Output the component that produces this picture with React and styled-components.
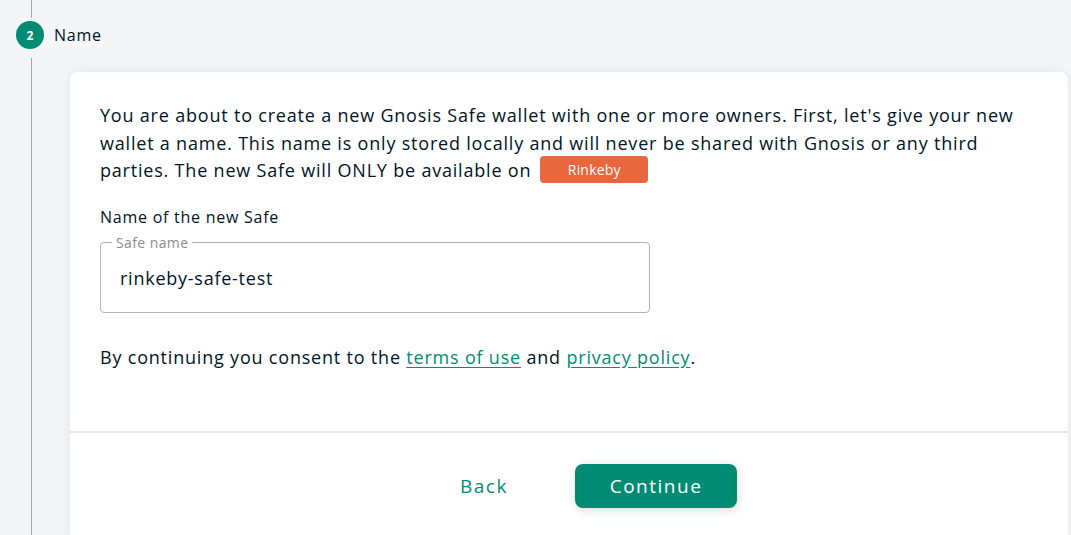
import styled, { createGlobalStyle } from 'styled-components';

const GlobalStyle = createGlobalStyle`
  html, body {
    margin: 0;
    padding: 0;
    background: #f4f5f6;
    font-family: 'Open Sans', 'Lato', sans-serif;
    letter-spacing: 0.75px;
    color: #001428;
    overflow: hidden;
  }
`;

const GREEN = '#008c73';

const Page = styled.div`
  width: 1071px;
  height: 535px;
  display: grid;
  grid-template-columns: 70px 1fr;
  grid-template-rows: 72px 1fr;
  box-sizing: border-box;
  padding-right: 3px;
  overflow: hidden;
`;

const Rail = styled.div`
  grid-row: 1 / 3;
  grid-column: 1;
  display: flex;
  flex-direction: column;
  align-items: flex-start;
  padding-left: 31px;
`;

const RailLine = styled.div`
  width: 1px;
  height: ${(p) => p.$h || 'auto'};
  flex-grow: ${(p) => (p.$grow ? 1 : 0)};
  background: #a2a8ad;
`;

const RailGap = styled.div`
  height: 40px;
`;

const StepRow = styled.div`
  grid-row: 1;
  grid-column: 1 / 3;
  display: flex;
  align-items: center;
  gap: 10px;
  padding-left: 16px;
  height: 72px;
  margin-top: -1px;
  z-index: 1;
`;

const StepCircle = styled.span`
  width: 28px;
  height: 28px;
  border-radius: 50%;
  background: ${GREEN};
  color: #fff;
  font-size: 12px;
  font-weight: 700;
  letter-spacing: 0;
  display: flex;
  align-items: center;
  justify-content: center;
`;

const StepLabel = styled.span`
  font-size: 16px;
  color: #001428;
`;

const Card = styled.div`
  grid-row: 2;
  grid-column: 2;
  background: #fff;
  border-radius: 8px 8px 0 0;
  box-shadow: 0 0 10px rgba(40, 54, 61, 0.08);
  display: flex;
  flex-direction: column;
`;

const CardBody = styled.div`
  padding: 30px 30px 0 30px;
  height: 359px;
  box-sizing: border-box;
  display: flex;
  flex-direction: column;
`;

const Intro = styled.p`
  margin: 0;
  font-size: 18px;
  line-height: 27.5px;
  letter-spacing: 0.8px;
  color: #001428;
`;

const Badge = styled.span`
  display: inline-block;
  width: 108px;
  height: 27px;
  line-height: 27px;
  text-align: center;
  margin-left: 9px;
  border-radius: 4px;
  background: #e8673c;
  color: #fff;
  font-size: 14px;
  letter-spacing: 0.2px;
  vertical-align: top;
  position: relative;
  top: -1px;
`;

const FieldTitle = styled.div`
  margin-top: 21px;
  font-size: 16px;
  color: #001428;
`;

const Fieldset = styled.fieldset`
  margin: 8px 0 0 0;
  width: 550px;
  height: 77px;
  box-sizing: border-box;
  border: 1px solid #b2b5b2;
  border-radius: 4px;
  padding: 0 19px;
`;

const Legend = styled.legend`
  font-size: 14px;
  color: #8b8d8f;
  letter-spacing: 0.4px;
  padding: 0 4px;
  margin-left: -8px;
  line-height: 1;
`;

const InputText = styled.div`
  font-size: 18px;
  color: #001428;
  margin-top: 16px;
`;

const Consent = styled.p`
  margin: 32px 0 0 0;
  font-size: 18px;
  letter-spacing: 0.8px;
  color: #001428;
`;

const Link = styled.a`
  color: ${GREEN};
  text-decoration: underline;
  text-underline-offset: 3px;
`;

const Divider = styled.div`
  height: 2px;
  background: #e8e7e6;
`;

const Footer = styled.div`
  display: flex;
  justify-content: center;
  align-items: center;
  gap: 41px;
  padding: 31px 0 0 33px;
`;

const Button = styled.button`
  border: none;
  border-radius: 8px;
  cursor: pointer;
  font-family: inherit;
  font-size: 19px;
  letter-spacing: 1.5px;
  height: 44px;
  background: ${(p) => (p.$primary ? GREEN : 'transparent')};
  color: ${(p) => (p.$primary ? '#fff' : GREEN)};
  width: ${(p) => (p.$primary ? '162px' : '100px')};
  box-shadow: ${(p) => (p.$primary ? '1px 2px 10px rgba(40, 54, 61, 0.18)' : 'none')};
`;

export default function App() {
  return (
    <>
      <GlobalStyle />
      <Page>
        <Rail>
          <RailLine $h="18px" />
          <RailGap />
          <RailLine $grow />
        </Rail>
        <StepRow>
          <StepCircle>2</StepCircle>
          <StepLabel>Name</StepLabel>
        </StepRow>
        <Card>
          <CardBody>
            <Intro>
              You are about to create a new Gnosis Safe wallet with one or more owners. First, let's
              give your new wallet a name. This name is only stored locally and will never be shared
              with Gnosis or any third parties. The new Safe will ONLY be available on
              <Badge>Rinkeby</Badge>
            </Intro>
            <FieldTitle>Name of the new Safe</FieldTitle>
            <Fieldset>
              <Legend>Safe name</Legend>
              <InputText>rinkeby-safe-test</InputText>
            </Fieldset>
            <Consent>
              By continuing you consent to the <Link>terms of use</Link> and{' '}
              <Link>privacy policy</Link>.
            </Consent>
          </CardBody>
          <Divider />
          <Footer>
            <Button>Back</Button>
            <Button $primary>Continue</Button>
          </Footer>
        </Card>
      </Page>
    </>
  );
}
